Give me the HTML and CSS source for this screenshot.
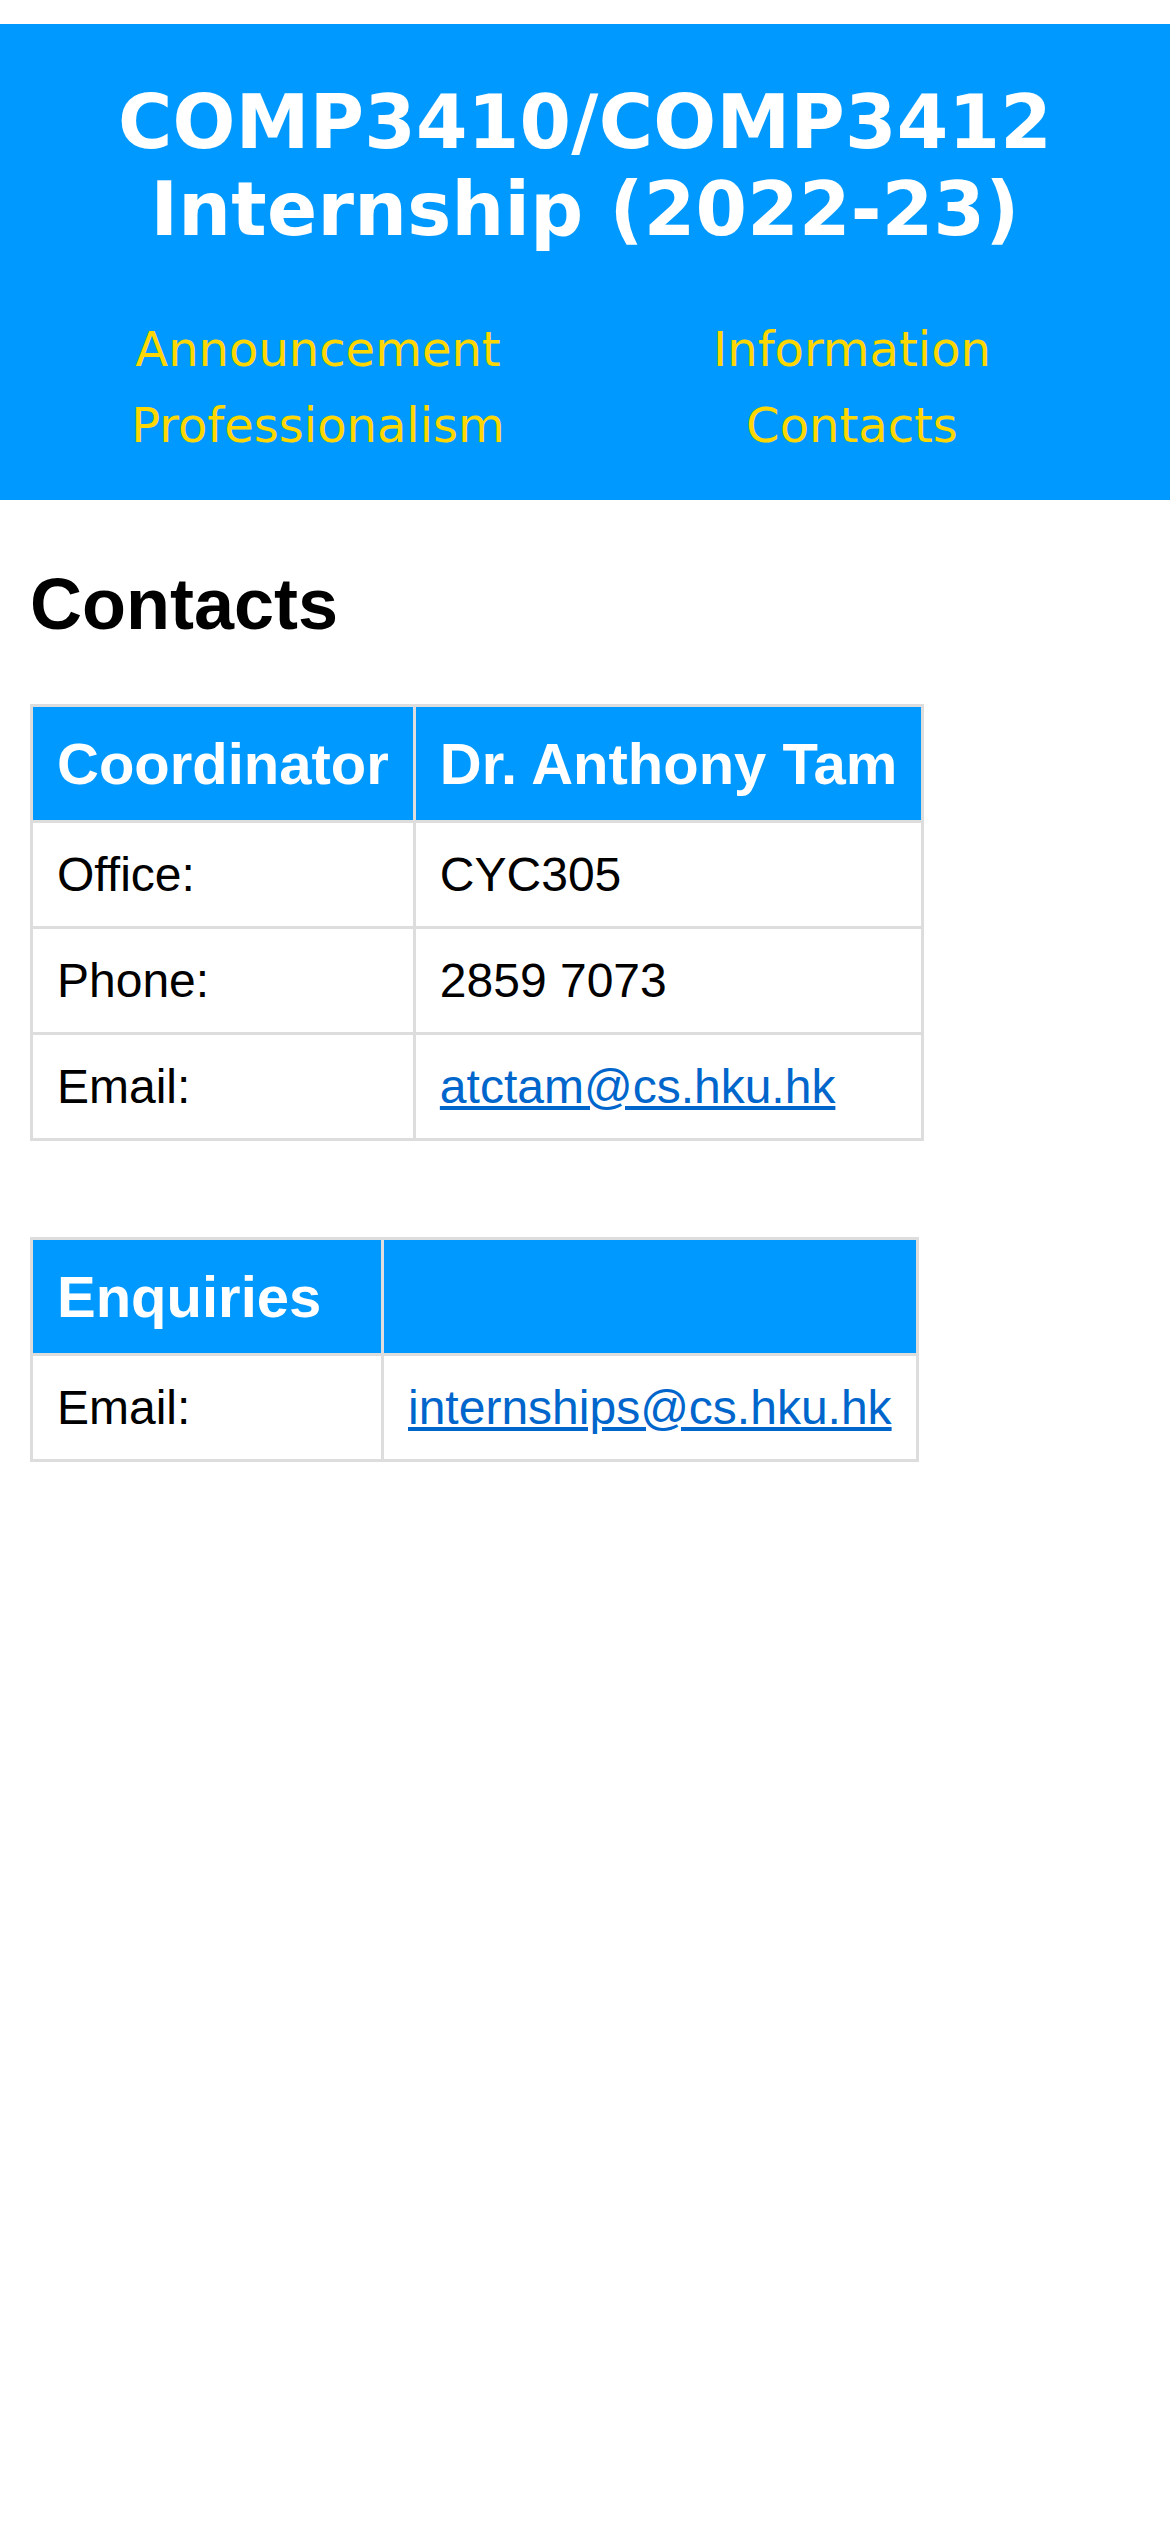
FILE: index.html
```html
<!DOCTYPE html>
<html lang="en">
<head>
<meta charset="utf-8">
<title>COMP3410/COMP3412 Internship (2022-23) - Contacts</title>
<link rel="stylesheet" href="styles.css">
</head>
<body>
<header class="banner">
  <h1 class="title">COMP3410/COMP3412<br>Internship (2022-23)</h1>
  <nav class="menu">
    <a href="#" class="menu-link">Announcement</a>
    <a href="#" class="menu-link">Information</a>
    <a href="#" class="menu-link">Professionalism</a>
    <a href="#" class="menu-link">Contacts</a>
  </nav>
</header>
<main class="content">
  <h2 class="page-heading">Contacts</h2>
  <table class="info-table">
    <tr><th>Coordinator</th><th>Dr. Anthony Tam</th></tr>
    <tr><td>Office:</td><td>CYC305</td></tr>
    <tr><td>Phone:</td><td>2859 7073</td></tr>
    <tr><td>Email:</td><td><a href="#" class="mail">atctam@cs.hku.hk</a></td></tr>
  </table>
  <table class="info-table enquiries">
    <tr><th class="label-col">Enquiries</th><th></th></tr>
    <tr><td>Email:</td><td><a href="#" class="mail">internships@cs.hku.hk</a></td></tr>
  </table>
</main>
</body>
</html>
```
FILE: styles.css
```css
html, body {
  margin: 0;
  padding: 0;
  background: #ffffff;
}

body {
  font-family: "Liberation Sans", Arial, sans-serif;
  color: #000000;
}

.banner {
  margin-top: 24px;
  background: #0099ff;
  padding: 55px 40px 37px;
}

.title {
  margin: 0;
  font-family: "DejaVu Sans", Verdana, sans-serif;
  font-weight: bold;
  font-size: 74px;
  letter-spacing: 0.3px;
  line-height: 87px;
  color: #ffffff;
  text-align: center;
}

.menu {
  margin: 58px 11px 0;
  display: grid;
  grid-template-columns: 1fr 1fr;
  justify-items: center;
  font-family: "DejaVu Sans", Verdana, sans-serif;
  font-size: 48px;
  line-height: 76px;
}

.menu-link {
  color: #ffd700;
  text-decoration: none;
}

.content {
  padding: 0 30px;
}

.page-heading {
  margin: 63px 0 58px;
  font-size: 72px;
  line-height: 83px;
  font-weight: bold;
}

.info-table {
  border-collapse: collapse;
  font-size: 48px;
}

.info-table th,
.info-table td {
  border: 3px solid #dddddd;
  padding: 24px;
  text-align: left;
  vertical-align: middle;
}

.info-table td {
  line-height: 55px;
}

.info-table th {
  background: #0099ff;
  color: #ffffff;
  font-weight: bold;
  font-size: 58px;
  line-height: 65px;
}

.enquiries {
  margin-top: 96px;
}

.enquiries .label-col {
  width: 300px;
}

.mail {
  color: #0066cc;
  text-decoration: underline;
}
```
